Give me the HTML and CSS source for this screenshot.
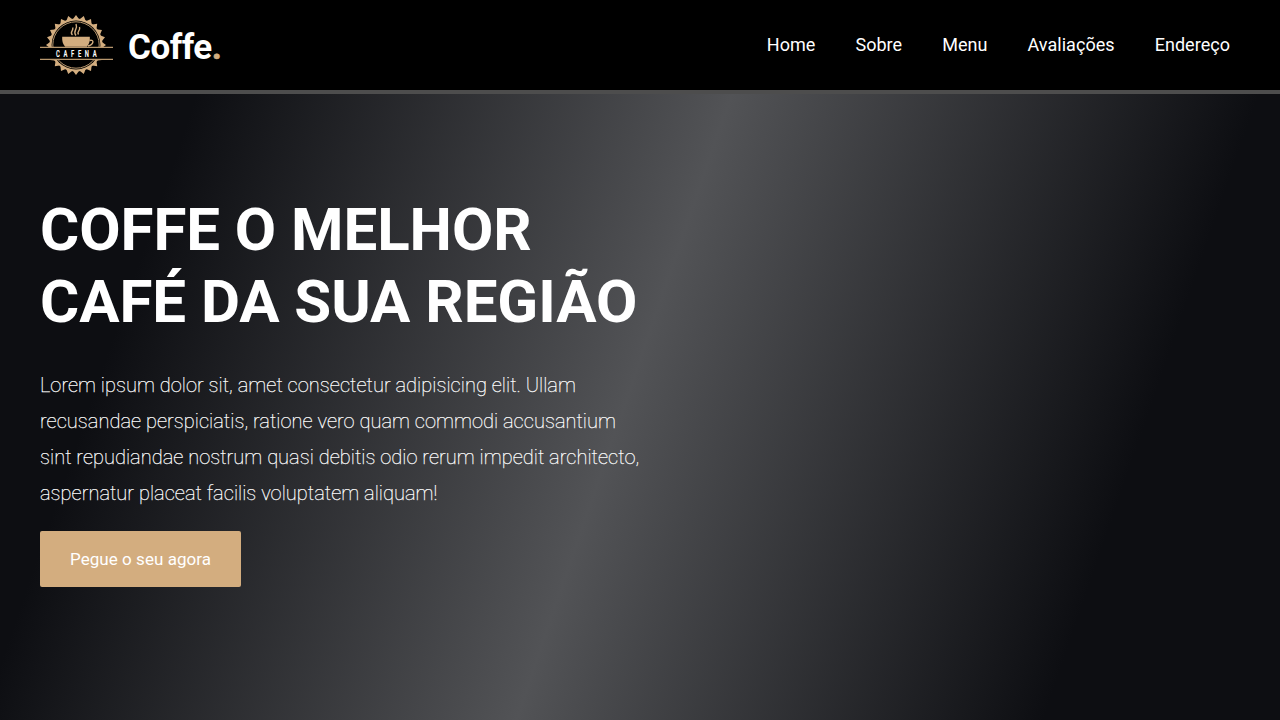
FILE: index.html
```html
<!DOCTYPE html>
<html lang="pt-br">
<head>
<meta charset="UTF-8">
<title>Coffe</title>
<link rel="stylesheet" href="styles.css">
</head>
<body>
<header class="header">
  <a class="brand">
    <svg class="logo" width="73" height="62" viewBox="0 0 73 62">
      <defs><path id="star" d="M36 1 48.800 18.200 66 31 48.800 43.800 36 61 23.200 43.800 6 31 23.200 18.200z"/></defs>
      <g class="gold">
        <use href="#star"/>
        <use href="#star" transform="rotate(15 36 31)"/>
        <use href="#star" transform="rotate(30 36 31)"/>
        <use href="#star" transform="rotate(45 36 31)"/>
        <use href="#star" transform="rotate(60 36 31)"/>
        <use href="#star" transform="rotate(75 36 31)"/>
        <circle cx="36" cy="31" r="26.500"/>
      </g>
      <circle class="disc" cx="36" cy="31" r="24.400"/>
      <circle class="ring" cx="36" cy="31" r="23.200"/>
      <rect class="band" x="0" y="33" width="73" height="13"/>
      <path class="line" d="M0 33.300h73M0 45.400h73"/>
      <path class="gold" d="M22.200 22.700h27.600c.2 5-.8 7.500-3 10H25.200c-2.200-2.500-3.200-5-3-10z"/>
      <path class="handle" d="M49.500 26.500c5-1.500 4.500 4-1.500 5.500"/>
      <path class="steam" d="M32.500 21c-3.500-3 1.500-4 .2-7.500M36 21.500c-4-4.500 2.500-6 0-11.500M38.500 20.500c-2.500-3 2.500-3.500 1-7.500"/>
      <text class="logo-text" x="26.500" y="43" transform="scale(.6 1)" textLength="68">CAFENA</text>
    </svg>
    <span class="name">Coffe<span class="dot">.</span></span>
  </a>
  <nav class="nav"><a>Home</a><a>Sobre</a><a>Menu</a><a>Avaliações</a><a>Endereço</a></nav>
</header>
<main class="home">
  <div class="content">
    <h1 class="title">COFFE O MELHOR CAFÉ DA SUA REGIÃO</h1>
    <p class="text">Lorem ipsum dolor sit, amet consectetur adipisicing elit. Ullam recusandae perspiciatis, ratione vero quam commodi accusantium sint repudiandae nostrum quasi debitis odio rerum impedit architecto, aspernatur placeat facilis voluptatem aliquam!</p>
    <a class="btn">Pegue o seu agora</a>
  </div>
</main>
</body>
</html>
```
FILE: styles.css
```css
* { box-sizing: border-box; margin: 0; padding: 0; }
body {
  height: 720px;
  overflow: hidden;
  display: flex;
  flex-direction: column;
  font-family: Roboto, sans-serif;
  color: #fff;
  background: linear-gradient(109deg, #0d0e12 15%, #525356 50%, #0d0e12 84.5%);
}
.header {
  height: 94px;
  padding: 0 50px 0 40px;
  display: flex;
  justify-content: space-between;
  background: #000;
  border-bottom: 4px solid #4d4d4d;
}
.brand { display: flex; align-items: center; gap: 15px; }
.name { font-size: 35px; font-weight: 700; line-height: 41px; padding-top: 4px; letter-spacing: -.5px; }
.dot { color: #d3ad7f; -webkit-text-stroke: .6px #d3ad7f; }
.nav { display: flex; align-items: center; gap: 40px; padding-bottom: 2px; font-size: 18px; letter-spacing: .04px; }
.home { flex: 1; padding: 99px 40px 0; }
.content { width: 600px; }
.title { font-size: 60px; line-height: 72px; font-weight: 700; letter-spacing: -.05px; padding-top: 1px; }
.text {
  padding-top: 29px;
  font-size: 20px;
  line-height: 36px;
  font-weight: 100;
  letter-spacing: .04px;
  -webkit-text-stroke: .25px #fff;
}
.btn {
  display: inline-flex;
  align-items: center;
  height: 56px;
  margin-top: 20px;
  padding: 0 30px;
  font-size: 17px;
  letter-spacing: .05px;
  background: #d3ad7f;
  border-radius: 2px;
}
.logo { display: block; }
.disc { fill: #000; }
.ring { fill: none; stroke: #b8976e; stroke-width: 1; }
.band { fill: #000; }
.line { stroke: #b8976e; stroke-width: 1.200; }
.gold { fill: #d3ad7f; }
.handle, .steam { fill: none; stroke: #d3ad7f; stroke-width: 1.400; }
.logo-text { fill: #fff; font-size: 9.800px; font-weight: 700; font-family: Roboto, sans-serif; }
```
